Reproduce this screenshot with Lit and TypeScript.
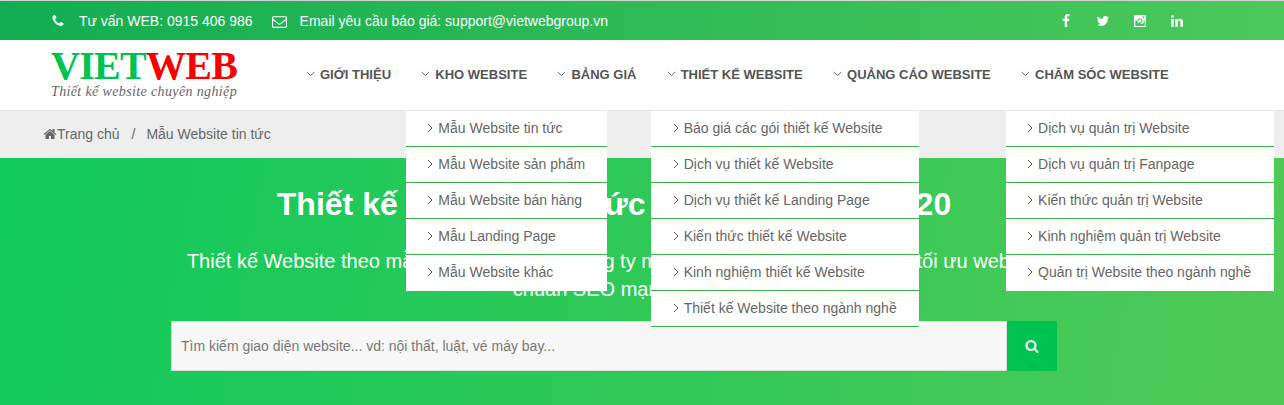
import { LitElement, html, css, svg } from "lit";
import { customElement } from "lit/decorators.js";

const P = {
  phone: "M1600 1240q0 27-10 70.5t-21 68.5q-21 50-122 106-94 51-186 51-27 0-53-3.5t-57.5-12.5-47-14.5-55.5-20.5-49-18q-98-35-175-83-127-79-264-216t-216-264q-48-77-83-175-3-9-18-49t-20.5-55.5-14.5-47-12.5-57.5-3.5-53q0-92 51-186 56-101 106-122 25-11 68.5-21t70.5-10q14 0 21 3 18 6 53 76 11 19 30 54t35 63.5 31 53.5q3 4 17.5 25t21.5 35.5 7 28.5q0 20-28.5 50t-62 55-62 53-28.5 46q0 9 5 22.5t8.5 20.5 14 24 11.5 19q76 137 174 235t235 174q2 1 19 11.5t24 14 20.5 8.5 22.5 5q18 0 46-28.5t53-62 55-62 50-28.5q14 0 28.5 7t35.5 21.5 25 17.5q25 15 53.5 31t63.5 35 54 30q70 35 76 53 3 7 3 21z",
  mail: "M1664 1504v-768q-32 36-69 66-268 206-426 338-51 43-83 67t-86.5 48.5-102.5 24.5h-2q-48 0-102.5-24.5t-86.5-48.5-83-67q-158-132-426-338-37-30-69-66v768q0 13 9.5 22.5t22.5 9.5h1472q13 0 22.5-9.5t9.5-22.5zm0-1051v-24.5l-.5-13-3-12.5-5.5-9-9-7.5-14-2.5h-1472q-13 0-22.5 9.5t-9.5 22.5q0 168 147 284 193 152 401 317 6 5 35 29.5t46 37.5 44.5 31.5 50.5 27.5 43 9h2q20 0 43-9t50.5-27.5 44.5-31.5 46-37.5 35-29.5q208-165 401-317 54-43 100.5-115.5t46.5-131.5zm128-37v1088q0 66-47 113t-113 47h-1472q-66 0-113-47t-47-113v-1088q0-66 47-113t113-47h1472q66 0 113 47t47 113z",
  fb: "M1343 12v264h-157q-86 0-116 36t-30 108v189h293l-39 296h-254v759h-306v-759h-255v-296h255v-218q0-186 104-288.5t277-102.5q147 0 228 12z",
  tw: "M1684 408q-67 98-162 167 1 14 1 42 0 130-38 259.5t-115.5 248.5-184.5 210.5-258 146-323 54.5q-271 0-496-145 35 4 76 4 225 0 401-138-105-2-188-64.5t-114-159.5q33 5 61 5 43 0 85-11-112-23-185.5-111.5t-73.5-205.5v-4q68 38 146 41-66-44-105-115t-39-154q0-88 44-163 121 149 294.5 238.5t371.5 99.5q-8-38-8-74 0-134 94.5-228.5t228.5-94.5q140 0 236 102 109-21 205-78-37 115-142 178 97-10 194-52z",
  ig: "M256 128h1280q128 0 128 128v1280q0 128-128 128h-1280q-128 0-128-128v-1280q0-128 128-128zm1008 180q-40 0-40 40v150q0 40 40 40h150q40 0 40-40v-150q0-40-40-40zm-368 252a336 336 0 1 0 .1 0zm0 140a196 196 0 1 1-.1 0zm-604 120v680q0 40 40 40h1128q40 0 40-40v-680h-150q30 70 30 150a324 324 0 0 1-648 0q0-80 30-150z",
  li: "M477 625v991h-330v-991h330zm21-306q1 73-50.5 122t-135.5 49h-2q-82 0-132-49t-50-122q0-74 51.5-122.5t134.5-48.5 133 48.5 51 122.5zm1166 729v568h-329v-530q0-105-40.5-164.5t-126.5-59.5q-63 0-105.5 34.5t-63.5 85.5q-11 30-11 81v553h-329q2-399 2-647t-1-296l-1-48h329v144h-2q20-32 41-56t56.5-52 87-43.5 114.5-15.5q171 0 275 113.5t104 332.5z",
  home: "M1472 992v480q0 26-19 45t-45 19h-384v-384h-256v384h-384q-26 0-45-19t-19-45v-480q0-1 .5-3t.5-3l575-474 575 474q1 2 1 6zm223-69l-62 74q-8 9-21 11h-3q-13 0-21-7l-692-577-692 577q-12 8-24 7-13-2-21-11l-62-74q-8-10-7-23.5t11-21.5l719-599q32-26 76-26t76 26l244 204v-195q0-14 9-23t23-9h192q14 0 23 9t9 23v408l219 182q10 8 11 21.5t-7 23.5z",
  search: "M1216 832q0-185-131.5-316.5t-316.5-131.5-316.5 131.5-131.5 316.5 131.5 316.5 316.5 131.5 316.5-131.5 131.5-316.5zm512 832q0 52-38 90t-90 38q-54 0-90-38l-343-342q-179 124-399 124-143 0-273.5-55.5t-225-150-150-225-55.5-273.5 55.5-273.5 150-225 225-150 273.5-55.5 273.5 55.5 225 150 150 225 55.5 273.5q0 220-124 399l343 343q37 37 37 90z",
};

const fa = (d: string, size: number) =>
  html`<svg class="fa" width=${size} height=${size} viewBox="0 0 1792 1792" fill="currentColor">${svg`<path d=${d} fill-rule="evenodd"></path>`}</svg>`;

const chevDown = html`<svg class="chev" width="9" height="6" viewBox="0 0 9 6" fill="none" stroke="#666" stroke-width="1"><path d="M.8 1l3.7 3.6L8.2 1"></path></svg>`;
const chevRight = html`<svg class="chev" width="6" height="10" viewBox="0 0 6 10" fill="none" stroke="#555" stroke-width="1"><path d="M1 1l4 4-4 4"></path></svg>`;

interface Drop { items: string[]; width: number; lastLine?: boolean }
interface Item { label: string; drop?: Drop }

const NAV: Item[] = [
  { label: "GIỚI THIỆU" },
  { label: "KHO WEBSITE", drop: { width: 201, items: ["Mẫu Website tin tức", "Mẫu Website sản phẩm", "Mẫu Website bán hàng", "Mẫu Landing Page", "Mẫu Website khác"] } },
  { label: "BẢNG GIÁ" },
  { label: "THIẾT KẾ WEBSITE", drop: { width: 268, lastLine: true, items: ["Báo giá các gói thiết kế Website", "Dịch vụ thiết kế Website", "Dịch vụ thiết kế Landing Page", "Kiến thức thiết kế Website", "Kinh nghiệm thiết kế Website", "Thiết kế Website theo ngành nghề"] } },
  { label: "QUẢNG CÁO WEBSITE" },
  { label: "CHĂM SÓC WEBSITE", drop: { width: 268, items: ["Dịch vụ quản trị Website", "Dịch vụ quản trị Fanpage", "Kiến thức quản trị Website", "Kinh nghiệm quản trị Website", "Quản trị Website theo ngành nghề"] } },
];

@customElement("app-root")
export class AppRoot extends LitElement {
  static styles = css`
    :host {
      display: block;
      width: 1284px;
      height: 405px;
      overflow: hidden;
      font-family: "Liberation Sans", Arial, sans-serif;
      font-size: 14px;
      color: #666;
      background: #fff;
    }
    .fa { display: block; flex: none; }
    .chev { display: block; flex: none; }
    .top {
      border-top: 1px solid #d4d4d4;
      height: 40px;
      box-sizing: border-box;
      padding: 1px 100px 0 51px;
      display: flex;
      align-items: center;
      color: #fff;
      background: linear-gradient(90deg, #12ad52, #4bc95a);
      background-clip: padding-box;
    }
    .top .contact { display: flex; align-items: center; }
    .top .contact .txt { margin: 0 19px 0 14px; }
    .top .contact .txt.b { margin: 0 0 0 13px; }
    .social { margin-left: auto; display: flex; gap: 23px; align-items: center; }
    .header {
      height: 70px;
      box-sizing: border-box;
      display: flex;
      align-items: center;
      padding-left: 51px;
      position: relative;
      z-index: 2;
    }
    .logo { width: 255px; flex: none; align-self: flex-start; padding-top: 10px; }
    .logo .mark {
      font-family: "Liberation Serif", serif;
      font-weight: 700;
      font-size: 40px;
      line-height: 32px;
      letter-spacing: -0.7px;
      color: #00c251;
    }
    .logo .mark b { color: #f80000; font-weight: 700; }
    .logo .tag {
      font-family: "Liberation Serif", serif;
      font-style: italic;
      font-size: 14px;
      line-height: 16px;
      color: #666;
      letter-spacing: 0.37px;
      margin-top: 2px;
    }
    nav { display: flex; gap: 30.3px; margin-top: -2px; }
    .item { position: relative; display: flex; align-items: center; gap: 5px; font-size: 13px; font-weight: 700; color: #555; height: 20px; white-space: nowrap; }
    .drop {
      position: absolute;
      left: -15.5px;
      top: 47px;
      background: #fff;
      font-size: 14px;
      font-weight: 400;
      color: #666;
    }
    .drop a {
      display: flex;
      align-items: center;
      padding-left: 21.5px;
      gap: 5px;
      border-bottom: 1px solid #3db54a;
      padding-bottom: 1px;
      height: 34px;
    }
    .drop a:last-child { border-bottom-color: #fff; }
    .drop.line a:last-child { border-bottom-color: #3db54a; }
    .crumb {
      height: 48px;
      box-sizing: border-box;
      border-top: 1px solid #e6e6e6;
      padding-bottom: 2px;
      background: #eee;
      display: flex;
      align-items: center;
      padding-left: 43px;
      color: #666;
    }
    .crumb .sep { margin: 0 11px 0 12px; }
    .hero {
      height: 247px;
      box-sizing: border-box;
      padding: 26px 56px 0 0;
      background: linear-gradient(100deg, #0fc95a, #50c957);
      color: #fff;
      text-align: center;
    }
    h1 { margin: 0; font-size: 32px; line-height: 40px; font-weight: 700; }
    h1 .fit { letter-spacing: -0.7px; }
    .sub { margin: 23px auto 0; width: 870px; font-size: 20px; line-height: 28px; }
    .search { margin: 18px auto 0; width: 886px; height: 50px; display: flex; }
    .search .input {
      flex: 1;
      box-sizing: border-box;
      border: 1px solid #ddd;
      background: #f7f7f7;
      color: #777;
      text-align: left;
      line-height: 48px;
      padding-left: 9px;
    }
    .search .btn { width: 50px; background: #00c251; display: flex; align-items: center; justify-content: center; color: #fff; }
  `;

  render() {
    return html`
      <div class="top">
        <div class="contact">
          ${fa(P.phone, 14)}<span class="txt">Tư vấn WEB: 0915 406 986</span>
          ${fa(P.mail, 15)}<span class="txt b">Email yêu cầu báo giá: support@vietwebgroup.vn</span>
        </div>
        <div class="social">${fa(P.fb, 14)}${fa(P.tw, 14)}${fa(P.ig, 14)}${fa(P.li, 14)}</div>
      </div>
      <div class="header">
        <div class="logo">
          <div class="mark">VIET<b>WEB</b></div>
          <div class="tag">Thiết kế website chuyên nghiệp</div>
        </div>
        <nav>
          ${NAV.map((n) => html`<div class="item">${chevDown}<span>${n.label}</span>
            ${n.drop ? html`<div class="drop ${n.drop.lastLine ? "line" : ""}" style="width:${n.drop.width}px">
              ${n.drop.items.map((t) => html`<a>${chevRight}<span>${t}</span></a>`)}
            </div>` : ""}
          </div>`)}
        </nav>
      </div>
      <div class="crumb">${fa(P.home, 14)}<span>Trang chủ</span><span class="sep">/</span><span>Mẫu Website tin tức</span></div>
      <div class="hero">
        <h1>Thiết kế Website Tin tức <span class="fit">chuyên nghiệp</span> 2020</h1>
        <p class="sub">Thiết kế Website theo mẫu tin tức giúp các công ty mở rộng kinh doanh nay được tối ưu website chuẩn SEO mạnh nhất</p>
        <div class="search">
          <div class="input">Tìm kiếm giao diện website... vd: nội thất, luật, vé máy bay...</div>
          <div class="btn">${fa(P.search, 14)}</div>
        </div>
      </div>
    `;
  }
}
